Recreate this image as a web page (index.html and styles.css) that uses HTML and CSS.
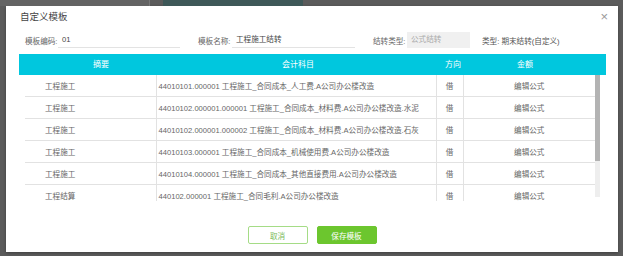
FILE: index.html
```html
<!DOCTYPE html>
<html lang="zh-CN">
<head>
  <meta charset="UTF-8">
  <title>自定义模板</title>
  <link rel="stylesheet" href="styles.css">
</head>
<body>
  <!-- page behind the overlay -->
  <div class="behind">
    <div class="behind-side"></div>
    <div class="behind-tab"></div>
  </div>

  <div class="dialog">
    <div class="dialog-title">
      <span>自定义模板</span>
      <span class="close">×</span>
    </div>

    <div class="form-row">
      <label class="lbl lbl-code">模板编码:</label>
      <div class="line-input input-code">01</div>
      <label class="lbl lbl-name">模板名称:</label>
      <div class="line-input input-name">工程施工结转</div>
      <label class="lbl lbl-type">结转类型:</label>
      <div class="box-input">公式结转</div>
      <span class="type-text">类型: 期末结转(自定义)</span>
    </div>

    <div class="grid-head">
      <div>摘要</div>
      <div>会计科目</div>
      <div>方向</div>
      <div>金额</div>
    </div>

    <div class="grid-body">
      <div class="grid-view">
        <table>
          <colgroup>
            <col class="c-sum">
            <col class="c-acc">
            <col class="c-dir">
            <col class="c-amt">
          </colgroup>
          <tbody>
            <tr><td class="sum">工程施工</td><td class="acc">44010101.000001 工程施工_合同成本_人工费.A公司办公楼改造</td><td class="mid">借</td><td class="mid">编辑公式</td></tr>
            <tr><td class="sum">工程施工</td><td class="acc">44010102.000001.000001 工程施工_合同成本_材料费.A公司办公楼改造.水泥</td><td class="mid">借</td><td class="mid">编辑公式</td></tr>
            <tr><td class="sum">工程施工</td><td class="acc">44010102.000001.000002 工程施工_合同成本_材料费.A公司办公楼改造.石灰</td><td class="mid">借</td><td class="mid">编辑公式</td></tr>
            <tr><td class="sum">工程施工</td><td class="acc">44010103.000001 工程施工_合同成本_机械使用费.A公司办公楼改造</td><td class="mid">借</td><td class="mid">编辑公式</td></tr>
            <tr><td class="sum">工程施工</td><td class="acc">44010104.000001 工程施工_合同成本_其他直接费用.A公司办公楼改造</td><td class="mid">借</td><td class="mid">编辑公式</td></tr>
            <tr><td class="sum">工程结算</td><td class="acc">440102.000001 工程施工_合同毛利.A公司办公楼改造</td><td class="mid">借</td><td class="mid">编辑公式</td></tr>
          </tbody>
        </table>
      </div>
      <div class="scrollbar"><div class="thumb"></div></div>
    </div>

    <div class="dialog-footer">
      <button class="btn btn-cancel">取消</button>
      <button class="btn btn-save">保存模板</button>
    </div>
  </div>
</body>
</html>
```

FILE: styles.css
```css
/* General */
body {
  margin: 0;
  background-color: #5b5b5b;
  font-family: "Liberation Sans", "Noto Sans CJK SC", sans-serif;
  color: #666;
  height: 256px;
  overflow: hidden;
}

/* Page behind the overlay */
.behind {
  display: flex;
  height: 6px;
}

.behind-side {
  width: 149px;
  background-color: #636363;
  border-right: 1px solid #777;
}

.behind-tab {
  width: 140px;
  margin-left: 13px;
  background-color: #3e5858;
}

/* Dialog */
.dialog {
  width: 612px;
  height: 246px;
  margin-left: 6px;
  background-color: #fff;
  box-shadow: 0 1px 3px rgba(0, 0, 0, 0.3);
}

.dialog-title {
  display: flex;
  justify-content: space-between;
  height: 22px;
  line-height: 22px;
  padding: 0 10px 0 14px;
  font-size: 9.5px;
  color: #444;
}

.close {
  font-size: 13px;
  color: #999;
  line-height: 22px;
}

/* Form row */
.form-row {
  display: flex;
  align-items: center;
  height: 16px;
  margin: 4px 0 6px 19px;
  font-size: 7.6px;
}

.lbl {
  color: #666;
  white-space: nowrap;
}

.lbl-code { width: 33px; }
.lbl-name { width: 34px; margin-left: 18px; }
.lbl-type { width: 34px; margin-left: 18px; }

.line-input {
  height: 15px;
  line-height: 15px;
  padding-left: 4px;
  border-bottom: 1px solid #e3e3e3;
  color: #444;
}

.input-code { width: 118px; }
.input-name { width: 119px; }

.box-input {
  width: 59px;
  height: 16px;
  line-height: 16px;
  padding-left: 4px;
  background-color: #f0f0f0;
  color: #aaa;
}

.type-text {
  margin-left: 12px;
  color: #555;
}

/* Grid header */
.grid-head {
  display: grid;
  grid-template-columns: 164px 230px 80px 64px 1fr;
  height: 21px;
  line-height: 21px;
  margin: 0 12px 0 13px;
  background-color: #00c7de;
  color: #fff;
  font-size: 8px;
  text-align: center;
}

/* Grid body */
.grid-body {
  display: flex;
  height: 126px;
  margin: 0 18px 0 19px;
}

.grid-view {
  width: 570px;
  overflow: hidden;
}

.scrollbar {
  width: 5px;
  height: 122px;
  background-color: #eeeeee;
}

.thumb {
  height: 86px;
  background-color: #b3b3b3;
}

table {
  width: 570px;
  border-collapse: collapse;
  table-layout: fixed;
  font-size: 7.6px;
}

.c-sum { width: 131px; }
.c-acc { width: 280px; }
.c-dir { width: 27px; }
.c-amt { width: 132px; }

td {
  height: 21px;
  padding: 0;
  border-bottom: 1px solid #e2e2e2;
  border-left: 1px solid #e2e2e2;
  white-space: nowrap;
  overflow: hidden;
}

td.sum {
  border-left: none;
  padding-left: 20px;
}

td.acc {
  padding-left: 2px;
}

td.mid {
  text-align: center;
}

/* Footer */
.dialog-footer {
  display: flex;
  justify-content: center;
  gap: 9px;
  margin-top: 25px;
}

.btn {
  width: 60px;
  height: 18px;
  padding: 0;
  border-radius: 2px;
  font-family: "Liberation Sans", "Noto Sans CJK SC", sans-serif;
  font-size: 7.6px;
  cursor: pointer;
}

.btn-cancel {
  background-color: #fff;
  border: 1px solid #a5dc86;
  color: #7dbb5a;
}

.btn-save {
  background-color: #6cc62e;
  border: 1px solid #6cc62e;
  color: #fff;
}
```
